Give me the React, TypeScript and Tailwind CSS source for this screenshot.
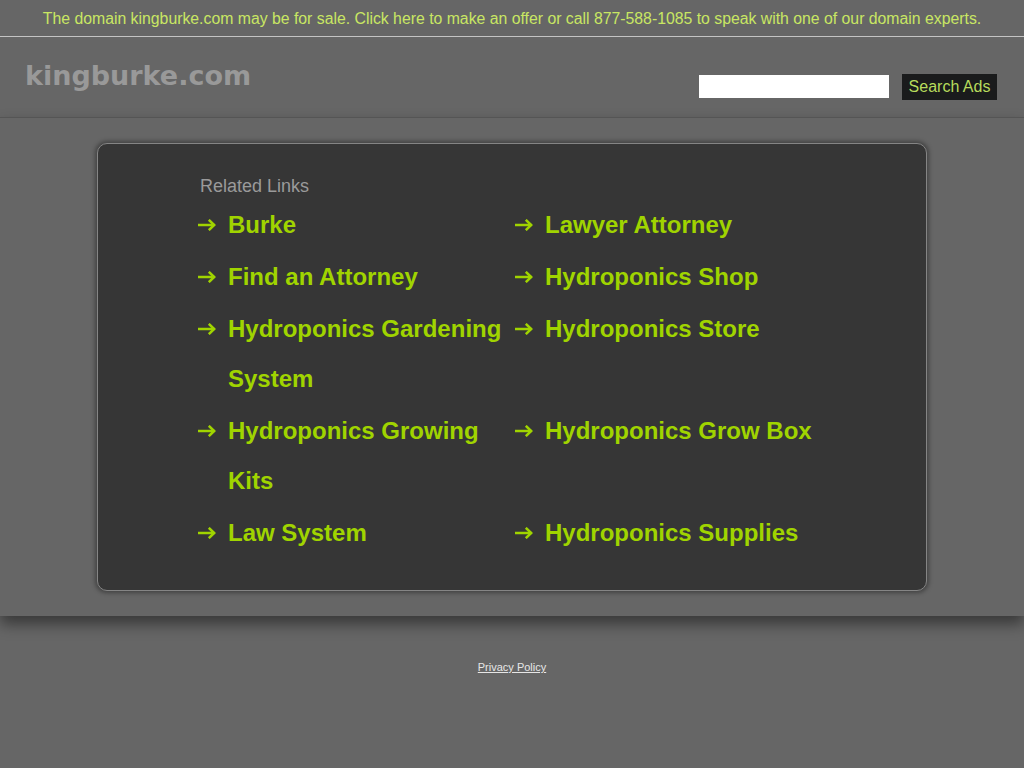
import React from "react";

const links: string[] = [
  "Burke",
  "Lawyer Attorney",
  "Find an Attorney",
  "Hydroponics Shop",
  "Hydroponics Gardening System",
  "Hydroponics Store",
  "Hydroponics Growing Kits",
  "Hydroponics Grow Box",
  "Law System",
  "Hydroponics Supplies",
];

function Arrow() {
  return (
    <svg width="18" height="12" viewBox="0 0 18 12" fill="none" stroke="#a0d400" strokeWidth="2.5">
      <path d="M0 6H16.5" />
      <path d="M10.8 0.8L16.2 6L10.8 11.2" strokeLinejoin="miter" />
    </svg>
  );
}

export default function App() {
  return (
    <div className="min-h-[768px] bg-[#666666] [font-family:'Liberation_Sans',Arial,sans-serif]">
      <div className="h-[37px] border-b border-[#c4c4c4] pt-[1px] text-center text-[15.8px] leading-[36px] text-[#c9e663]">
        The domain kingburke.com may be for sale. Click here to make an offer or call 877-588-1085 to speak with one of our domain experts.
      </div>
      <div className="flex h-[80px] items-start justify-between">
        <div className="pl-[25px] pt-[17px] text-[27px] font-bold leading-[44px] text-[#999999] [font-family:'DejaVu_Sans',Verdana,sans-serif]">
          kingburke.com
        </div>
        <div className="flex items-start gap-[13px] pr-[27px] pt-[37px]">
          <div className="mt-[1px] h-[23px] w-[190px] bg-white" />
          <div className="flex h-[26px] w-[95px] items-center justify-center bg-[#1a1b1c] text-[16px] text-[#b7dc5c]">
            Search Ads
          </div>
        </div>
      </div>
      <div className="relative border-t border-[#555555] bg-[#666666] px-[97px] pb-[25px] pt-[25px] shadow-[0_8px_14px_rgba(0,0,0,0.45)]">
        <div className="rounded-[10px] border border-[#858585] bg-[#363636] pb-[31px] pl-[100px] pt-[31px] shadow-[0_0_4px_2px_rgba(0,0,0,0.35)]">
          <div className="pl-[2px] text-[18px] leading-[22px] text-[#9a9a9a]">Related Links</div>
          <ul className="mt-[2px] grid grid-cols-[317px_317px]">
            {links.map((l) => (
              <li key={l} className="flex py-[1px] text-[24px] font-bold leading-[50px] text-[#a0d400]">
                <div className="flex h-[50px] w-[30px] shrink-0 items-center">
                  <Arrow />
                </div>
                <span className="w-[287px]">{l}</span>
              </li>
            ))}
          </ul>
        </div>
      </div>
      <div className="pt-[38px] text-center">
        <span className="text-[11px] leading-[14px] text-[#e6e6e6] underline">Privacy Policy</span>
      </div>
    </div>
  );
}
